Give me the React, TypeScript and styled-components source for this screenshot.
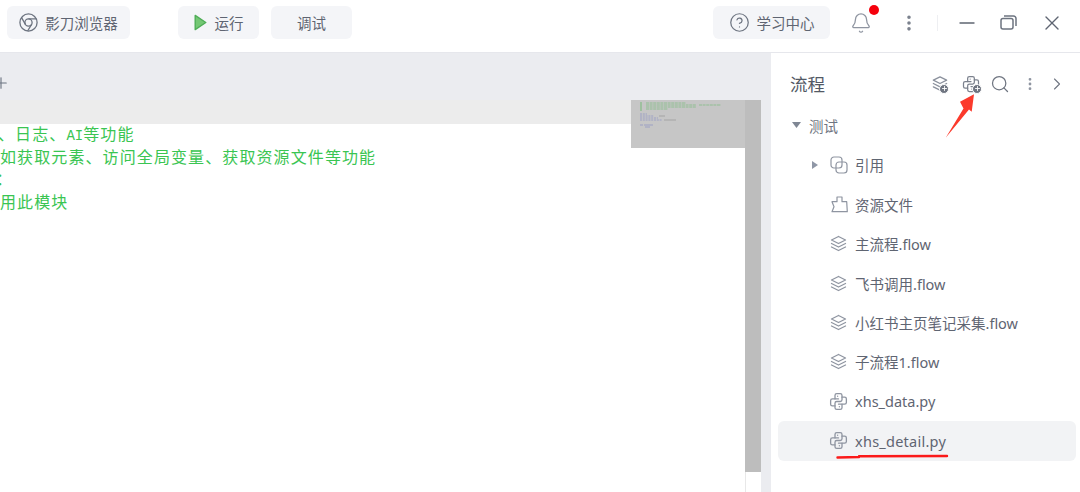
import React from "react";
import styled, { createGlobalStyle } from "styled-components";
import { Bell, ChevronRight, CircleHelp, EllipsisVertical, Minus, Plus, Search, X } from "lucide-react";
import { TbBrandPython, TbStack2 } from "react-icons/tb";

const GlobalStyle = createGlobalStyle`
  html, body {
    margin: 0;
    height: 100%;
    overflow: hidden;
    background: #fff;
  }
  #root {
    height: 100%;
  }
`;

const UI_FONT = `"Noto Sans", "Noto Sans CJK SC", sans-serif`;
const ICON_GREY = "#8f95a1";

const Root = styled.div`
  position: relative;
  display: flex;
  flex-direction: column;
  width: 1080px;
  height: 492px;
  overflow: hidden;
  font-family: ${UI_FONT};
  color: #5f6572;
`;

const TopBar = styled.header`
  display: flex;
  align-items: center;
  flex: none;
  box-sizing: border-box;
  height: 53px;
  padding: 0 16px 7px 7px;
  border-bottom: 1px solid #e6e7ec;
`;

const ToolButton = styled.div<{ $width: number; $left?: number; $gap?: number }>`
  display: flex;
  align-items: center;
  justify-content: center;
  gap: ${props => props.$gap ?? 7}px;
  flex: none;
  width: ${props => props.$width}px;
  height: 33px;
  margin-left: ${props => props.$left ?? 0}px;
  border-radius: 6px;
  background: #f4f5f8;
  font-size: 14.5px;
  color: #5f6572;
`;

const Spacer = styled.div`
  flex: 1;
`;

const BellBox = styled.div`
  position: relative;
  display: flex;
  width: 22px;
  margin-left: 20px;
`;

const RedDot = styled.span`
  position: absolute;
  top: -7px;
  right: -7px;
  width: 10px;
  height: 10px;
  border-radius: 50%;
  background: #f5000c;
`;

const BarDots = styled.div`
  display: flex;
  margin-left: 27px;
`;

const BarDivider = styled.div`
  width: 1px;
  height: 16px;
  margin: 0 17px 0 18px;
  background: #eeeff2;
`;

const WindowButton = styled.div<{ $left?: number }>`
  display: flex;
  margin-left: ${props => props.$left ?? 0}px;
`;

const Main = styled.div`
  display: flex;
  flex: 1;
  min-height: 0;
`;

const EditorPane = styled.section`
  display: flex;
  flex-direction: column;
  flex: none;
  width: 771px;
`;

const TabStrip = styled.div`
  display: flex;
  align-items: center;
  flex: none;
  height: 47px;
  padding-top: 12px;
  box-sizing: border-box;
  background: #ebecf0;
  overflow: hidden;
`;

const TabPlus = styled(Plus)`
  flex: none;
  margin-left: -8px;
`;

const EditorBody = styled.div`
  display: flex;
  flex: 1;
  min-height: 0;
`;

const CodeArea = styled.div`
  flex: 1;
  min-width: 0;
  overflow: hidden;
`;

const CurrentLine = styled.div`
  height: 24px;
  background: #ececec;
`;

const CodeLines = styled.div`
  margin-top: -2px;
`;

const CodeLine = styled.div<{ $shift: number }>`
  height: 22.6px;
  line-height: 22.6px;
  margin-left: ${props => props.$shift}px;
  font-family: "Noto Sans CJK SC", monospace;
  font-size: 16px;
  letter-spacing: 1.1px;
  white-space: nowrap;
  color: #3ac552;
`;

const Latin = styled.span`
  font-family: "Liberation Mono", monospace;
  font-size: 14px;
  letter-spacing: 0;
`;

const Minimap = styled.div`
  flex: none;
  width: 114px;
  height: 48px;
  background: #c6c6c6;
`;

const ScrollTrack = styled.div`
  flex: none;
  width: 16px;
  border-left: 1px solid #e8e8e8;
  box-sizing: border-box;
`;

const ScrollThumb = styled.div`
  height: 372px;
  margin-left: -1px;
  background: #bdbdbd;
`;

const Gutter = styled.div`
  flex: none;
  width: 10px;
  background: #ebecf0;
`;

const Sidebar = styled.aside`
  flex: 1;
  min-width: 0;
`;

const SideHeader = styled.div`
  display: flex;
  align-items: center;
  box-sizing: border-box;
  height: 55px;
  padding: 6px 13px 0 19px;
`;

const SideTitle = styled.h2`
  flex: 1;
  margin: 0;
  font-size: 17.5px;
  font-weight: 400;
  color: #535965;
`;

const HeaderIcon = styled.div<{ $left?: number }>`
  position: relative;
  display: flex;
  align-items: center;
  justify-content: center;
  width: 20px;
  height: 20px;
  margin-left: ${props => props.$left ?? 0}px;
`;

const PlusBadge = styled.span<{ $right: number }>`
  position: absolute;
  right: ${props => props.$right}px;
  bottom: 0;
  display: flex;
  align-items: center;
  justify-content: center;
  width: 8px;
  height: 8px;
  border-radius: 50%;
  border: 1px solid #fff;
  background: #6f7581;
  color: #fff;
`;

const Tree = styled.div`
  display: flex;
  flex-direction: column;
`;

const ProjectRow = styled.div`
  display: flex;
  align-items: center;
  gap: 8px;
  box-sizing: border-box;
  height: 37px;
  padding: 0 0 3px 21px;
  font-size: 14.5px;
  color: #6f7581;
`;

const TreeRow = styled.div<{ $selected?: boolean }>`
  position: relative;
  display: flex;
  align-items: center;
  gap: 7px;
  box-sizing: border-box;
  height: 39.45px;
  margin: 0 4px 0 7px;
  padding-left: 52px;
  border-radius: 6px;
  background: ${props => (props.$selected ? "#f2f3f5" : "transparent")};
  font-size: 14.5px;
  color: #5f6572;
  white-space: nowrap;
`;

const FlowIcon = styled(TbStack2)`
  flex: none;
  margin: 0 -0.5px 0 -2.5px;
`;

const PythonIcon = styled(TbBrandPython)`
  flex: none;
  margin: 0 -0.5px 0 -2.5px;
`;

const DetailLabel = styled.span`
  letter-spacing: 0.25px;
`;

const RowCaret = styled.svg`
  position: absolute;
  left: 34px;
  top: 15.5px;
`;

const Annotations = styled.svg`
  position: absolute;
  top: 0;
  left: 0;
  pointer-events: none;
`;

const ChromeIcon = () => (
  <svg width="19" height="19" viewBox="0 0 19 19" fill="none" stroke="#6d7480" strokeWidth="1.3">
    <circle cx="9.5" cy="9.5" r="8.6" />
    <circle cx="9.5" cy="9.5" r="3.6" />
    <path d="M9.5 5.9h8M6.4 11.3 2.4 4.4M12.6 11.3 8.6 18" />
  </svg>
);

const PlayIcon = () => (
  <svg width="13" height="17" viewBox="0 0 13 17">
    <path d="M1.2 1.4 11.8 8.5 1.2 15.6Z" fill="#74c774" stroke="#4fae57" strokeWidth="1.4" strokeLinejoin="round" />
  </svg>
);

const RestoreIcon = () => (
  <svg width="17" height="15" viewBox="0 0 17 15" fill="none" stroke="#6d7480" strokeWidth="1.5">
    <rect x="1" y="3.5" width="12" height="10.5" rx="2" />
    <path d="M4 1h9.5a2.5 2.5 0 0 1 2.5 2.5V11" />
  </svg>
);

const OverlapIcon = () => (
  <svg width="18" height="18" viewBox="0 0 18 18" fill="none" stroke={ICON_GREY} strokeWidth="1.2">
    <rect x="1" y="1" width="11" height="11" rx="3" />
    <rect x="6" y="6" width="11" height="11" rx="3" />
  </svg>
);

const ResourceIcon = () => (
  <svg width="18" height="18" viewBox="0 0 18 18" fill="none" stroke={ICON_GREY} strokeWidth="1.2" strokeLinejoin="round">
    <path d="M2 6.7h5V2h5v4.7h4.7l.6 10H2l2-5Z" />
  </svg>
);

const Caret = ({ down }: { down?: boolean }) =>
  down ? (
    <svg width="9" height="6" viewBox="0 0 9 6">
      <path d="M0 0h9L4.5 6Z" fill="#7f8794" />
    </svg>
  ) : (
    <RowCaret width="6" height="8" viewBox="0 0 6 8">
      <path d="M0 0v8l6-4Z" fill="#8f97a6" />
    </RowCaret>
  );

const MinimapDrawing = () => (
  <svg width="114" height="48" viewBox="0 0 114 48" fill="none" strokeWidth="0.6">
    <path d="M10 2v9" stroke="#63b866" strokeWidth="0.8" />
    <path d="M15 3h40M15 5h50M15 7h50M15 9h22" stroke="#6dbb70" strokeDasharray="3 0.6" />
    <path d="M68 5h22" stroke="#6dbb70" strokeDasharray="3 0.6" />
    <path d="M9 14h7M9 16h14M9 18h18M9 20h22" stroke="#8088c4" strokeDasharray="2 0.8" />
    <path d="M28 16h6M33 20h12" stroke="#8f8f8f" />
    <path d="M9 25h3M13 25h9M14 27h5" stroke="#8088c4" />
  </svg>
);

const treeItems: { label: string; kind: "flow" | "py"; selected?: boolean }[] = [
  { label: "主流程.flow", kind: "flow" },
  { label: "飞书调用.flow", kind: "flow" },
  { label: "小红书主页笔记采集.flow", kind: "flow" },
  { label: "子流程1.flow", kind: "flow" },
  { label: "xhs_data.py", kind: "py" },
  { label: "xhs_detail.py", kind: "py", selected: true }
];

export default function App() {
  return (
    <Root>
      <GlobalStyle />
      <TopBar>
        <ToolButton $width={123}>
          <ChromeIcon />
          影刀浏览器
        </ToolButton>
        <ToolButton $width={81} $left={48} $gap={8}>
          <PlayIcon />
          运行
        </ToolButton>
        <ToolButton $width={81} $left={12}>调试</ToolButton>
        <Spacer />
        <ToolButton $width={117}>
          <CircleHelp size={21} strokeWidth={1.4} color="#6d7480" />
          学习中心
        </ToolButton>
        <BellBox>
          <Bell size={22} strokeWidth={1.4} color={ICON_GREY} />
          <RedDot />
        </BellBox>
        <BarDots>
          <EllipsisVertical size={20} strokeWidth={2.3} color="#7b818d" />
        </BarDots>
        <BarDivider />
        <WindowButton>
          <Minus size={24} strokeWidth={1.4} color="#5f6572" />
        </WindowButton>
        <WindowButton $left={21}>
          <RestoreIcon />
        </WindowButton>
        <WindowButton $left={23}>
          <X size={24} strokeWidth={1.4} color="#5f6572" />
        </WindowButton>
      </TopBar>

      <Main>
        <EditorPane>
          <TabStrip>
            <TabPlus size={18} strokeWidth={1.5} color="#6b7280" />
          </TabStrip>
          <EditorBody>
            <CodeArea>
              <CurrentLine />
              <CodeLines>
                <CodeLine $shift={-2}>、日志、<Latin>AI</Latin>等功能</CodeLine>
                <CodeLine $shift={0}>如获取元素、访问全局变量、获取资源文件等功能</CodeLine>
                <CodeLine $shift={-4}>：</CodeLine>
                <CodeLine $shift={0}>用此模块</CodeLine>
              </CodeLines>
            </CodeArea>
            <Minimap>
              <MinimapDrawing />
            </Minimap>
            <ScrollTrack>
              <ScrollThumb />
            </ScrollTrack>
            <Gutter />
          </EditorBody>
        </EditorPane>

        <Sidebar>
          <SideHeader>
            <SideTitle>流程</SideTitle>
            <HeaderIcon>
              <TbStack2 size={21} color="#8a909c" strokeWidth={1.5} />
              <PlusBadge $right={1}><Plus size={7} strokeWidth={3} /></PlusBadge>
            </HeaderIcon>
            <HeaderIcon $left={11}>
              <TbBrandPython size={22} color="#7b818d" strokeWidth={1.5} />
              <PlusBadge $right={-1}><Plus size={7} strokeWidth={3} /></PlusBadge>
            </HeaderIcon>
            <HeaderIcon $left={9}>
              <Search size={20} strokeWidth={1.5} color="#6f7581" />
            </HeaderIcon>
            <HeaderIcon $left={10}>
              <EllipsisVertical size={16} strokeWidth={2.2} color={ICON_GREY} />
            </HeaderIcon>
            <HeaderIcon $left={7}>
              <ChevronRight size={26} strokeWidth={1.3} color="#6f7581" />
            </HeaderIcon>
          </SideHeader>

          <Tree>
            <ProjectRow>
              <Caret down />
              测试
            </ProjectRow>
            <TreeRow>
              <Caret />
              <OverlapIcon />
              引用
            </TreeRow>
            <TreeRow>
              <ResourceIcon />
              资源文件
            </TreeRow>
            {treeItems.map(item => (
              <TreeRow key={item.label} $selected={item.selected}>
                {item.kind === "flow" ? (
                  <FlowIcon size={21} color={ICON_GREY} strokeWidth={1.5} />
                ) : (
                  <PythonIcon size={21} color={ICON_GREY} strokeWidth={1.5} />
                )}
                {item.selected ? <DetailLabel>{item.label}</DetailLabel> : item.label}
              </TreeRow>
            ))}
          </Tree>
        </Sidebar>
      </Main>

      <Annotations width="1080" height="492" viewBox="0 0 1080 492">
        <path d="M945.7 137.7 963.5 108.5 960 101.7 974 94.3 971.7 111.7 969 109.5Z" fill="#fb3a2c" />
        <path d="M837.5 457.5 859 457M859 456.3 947 456" stroke="#fb1a1a" strokeWidth="2.4" fill="none" strokeLinecap="round" />
      </Annotations>
    </Root>
  );
}
